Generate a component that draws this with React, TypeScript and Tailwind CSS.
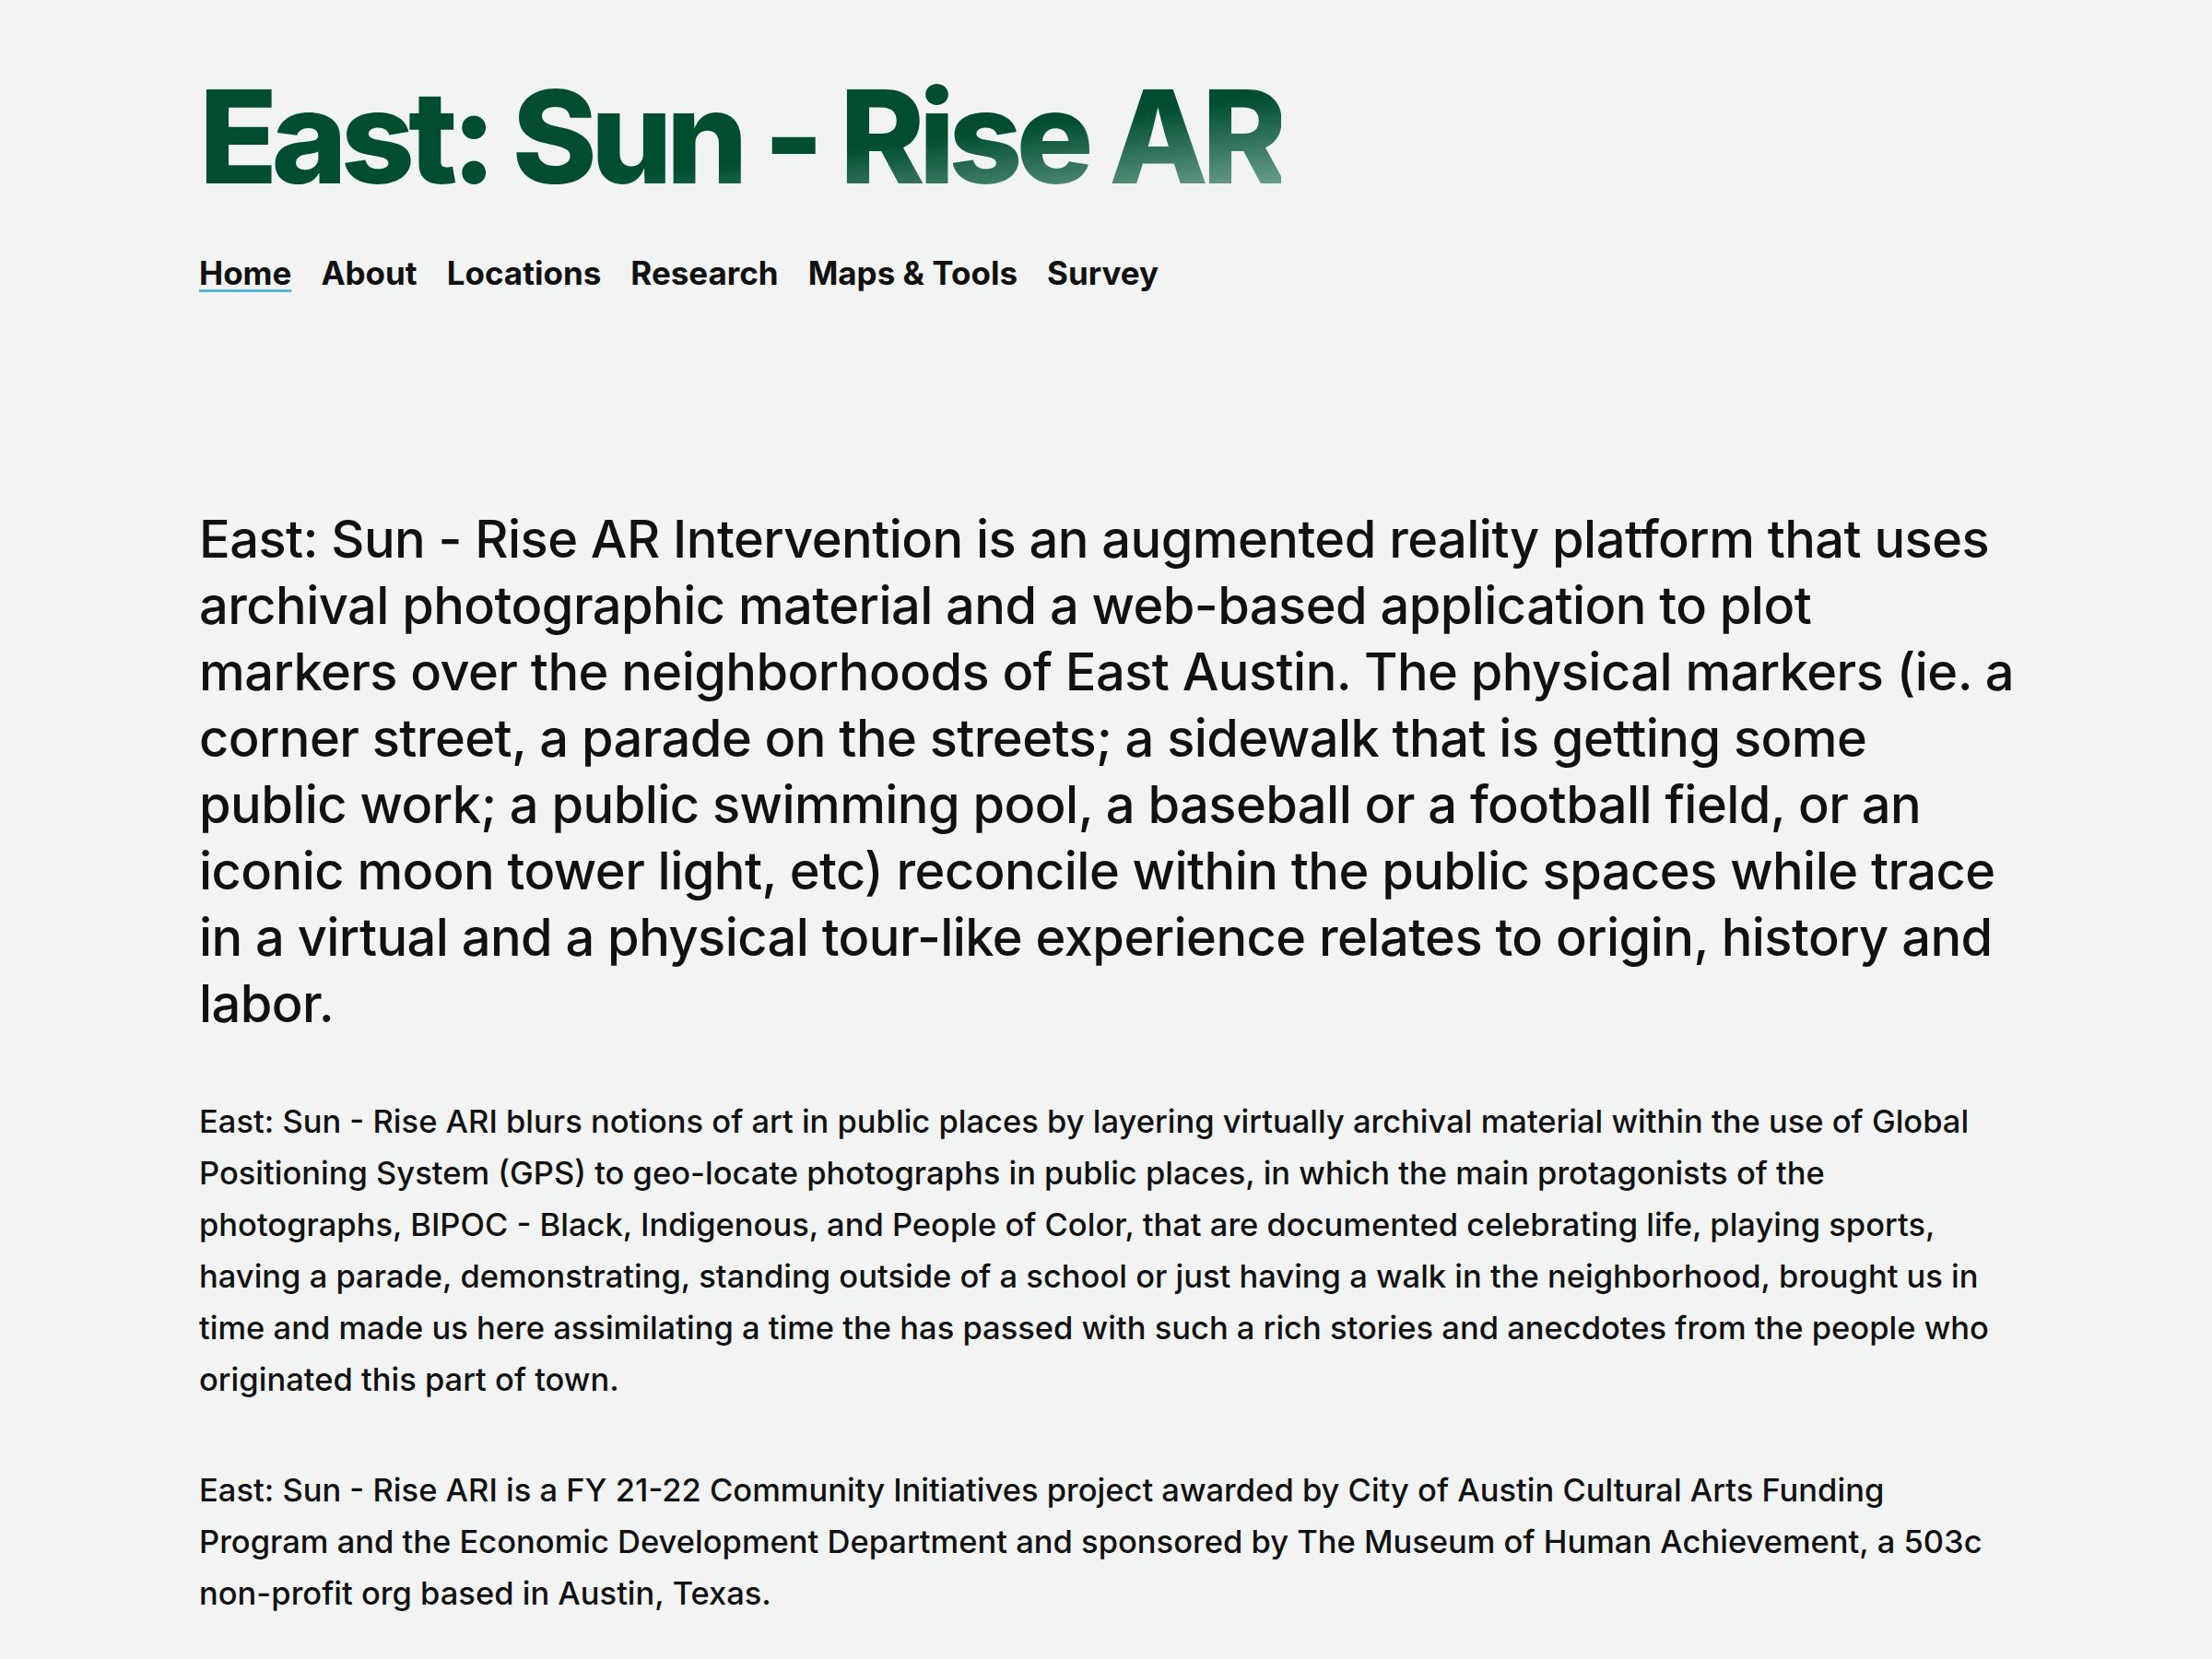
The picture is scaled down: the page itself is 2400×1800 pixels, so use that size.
import { Fragment } from 'react';

const links = ['Home', 'About', 'Locations', 'Research', 'Maps & Tools', 'Survey'];

const intro = [
  'East: Sun - Rise AR Intervention is an augmented reality platform that uses',
  'archival photographic material and a web-based application to plot',
  'markers over the neighborhoods of East Austin. The physical markers (ie. a',
  'corner street, a parade on the streets; a sidewalk that is getting some',
  'public work; a public swimming pool, a baseball or a football field, or an',
  'iconic moon tower light, etc) reconcile within the public spaces while trace',
  'in a virtual and a physical tour-like experience relates to origin, history and',
  'labor.',
];

const about = [
  'East: Sun - Rise ARI blurs notions of art in public places by layering virtually archival material within the use of Global',
  'Positioning System (GPS) to geo-locate photographs in public places, in which the main protagonists of the',
  'photographs, BIPOC - Black, Indigenous, and People of Color, that are documented celebrating life, playing sports,',
  'having a parade, demonstrating, standing outside of a school or just having a walk in the neighborhood, brought us in',
  'time and made us here assimilating a time the has passed with such a rich stories and anecdotes from the people who',
  'originated this part of town.',
];

const funding = [
  'East: Sun - Rise ARI is a FY 21-22 Community Initiatives project awarded by City of Austin Cultural Arts Funding',
  'Program and the Economic Development Department and sponsored by The Museum of Human Achievement, a 503c',
  'non-profit org based in Austin, Texas.',
];

function Lines({ lines }: { lines: string[] }) {
  return (
    <>
      {lines.map((l, i) => (
        <Fragment key={i}>
          {l}
          {i < lines.length - 1 && <br />}
        </Fragment>
      ))}
    </>
  );
}

export default function App() {
  return (
    <div className="min-h-screen bg-[#f2f4f3] font-['Inter',_'Liberation_Sans',_sans-serif] text-[#111111]">
      <div className="px-[216px] pt-[78px] pb-24">
        <header>
          <h1 className="inline-block bg-[linear-gradient(to_bottom_right,#004d30_58%,#86b3a2)] bg-clip-text pb-2 text-[140px] leading-[1] font-extrabold tracking-[-0.05em] text-transparent">
            East: Sun - Rise AR
          </h1>
          <nav className="mt-[44px] flex items-center gap-[32px] text-[35px] font-bold">
            {links.map((l, i) => (
              <a
                key={l}
                href="#"
                className={
                  i === 0
                    ? 'underline decoration-[#55b7d3] decoration-[3px] underline-offset-[5px]'
                    : ''
                }
              >
                {l}
              </a>
            ))}
          </nav>
        </header>

        <main className="mt-[226px] mr-[-120px]">
          <p className="text-[56px] leading-[72px] font-medium tracking-[-0.01em]">
            <Lines lines={intro} />
          </p>
          <p className="mt-[64px] text-[34.5px] leading-[56px] font-medium">
            <Lines lines={about} />
          </p>
          <p className="mt-[64px] text-[34.5px] leading-[56px] font-medium">
            <Lines lines={funding} />
          </p>
        </main>
      </div>
    </div>
  );
}
